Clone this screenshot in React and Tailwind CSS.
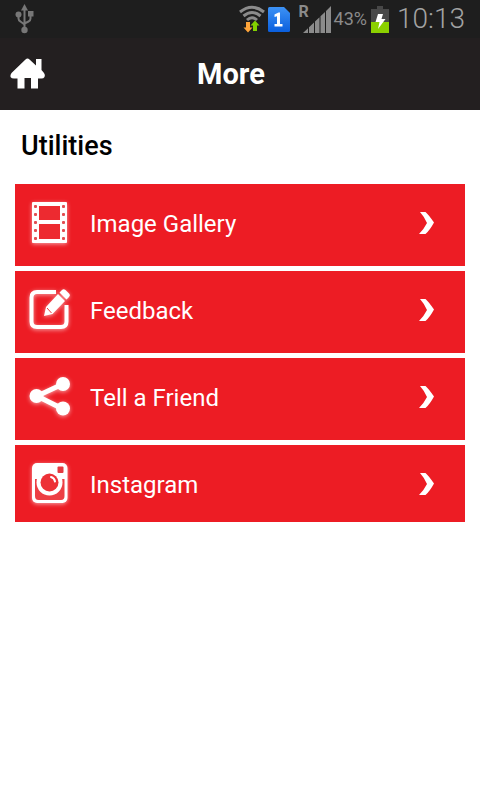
import React from "react";

function UsbIcon() {
  return (
    <svg viewBox="0 0 20 30" className="h-[30px] w-5" fill="none" stroke="#777" strokeWidth="2" aria-hidden="true">
      <path d="M9.500 5V25M3.500 11V14.500Q3.500 16.500 5.500 17.500L9.500 20.500M15.500 9V14.500Q15.500 16.500 13.500 17.500L9.500 19.500" />
      <path d="M9.500 0L13 6.500H6Z" fill="#777" stroke="none" />
      <circle cx="3.500" cy="10.500" r="3" fill="#777" stroke="none" />
      <rect x="13" y="7" width="5.500" height="5.500" fill="#777" stroke="none" />
      <circle cx="9.500" cy="26" r="3.200" fill="#777" stroke="none" />
    </svg>
  );
}

function WifiIcon() {
  return (
    <svg viewBox="0 0 26 28" className="h-7 w-[26px]" fill="none" aria-hidden="true">
      <g stroke="#8b8b8b" strokeWidth="3">
        <path d="M1 7Q13 -2.500 25 7" />
        <path d="M4.500 11Q13 4 21.500 11" />
        <path d="M8 15Q13 10.500 18 15" />
      </g>
      <path d="M7 17H11V22.500H13.500L9 27.500L4.500 22.500H7Z" fill="#ffa53a" />
      <path d="M14 26V20.500H11.500L16 15.500L20.500 20.500H18V26Z" fill="#82d000" />
    </svg>
  );
}

function SimIcon() {
  return (
    <svg viewBox="0 0 22 25" className="ml-[3px] h-[25px] w-[22px]" role="img" aria-label="SIM 1">
      <defs>
        <linearGradient id="sim" x1="0" y1="0" x2="0" y2="1">
          <stop offset="0" stopColor="#3d92f5" />
          <stop offset="1" stopColor="#0a5fdd" />
        </linearGradient>
      </defs>
      <path d="M1.500 0H16L22 6V23.500Q22 25 20.500 25H1.500Q0 25 0 23.500V1.500Q0 0 1.500 0Z" fill="url(#sim)" />
      <path d="M6.500 7.500L10.500 5.500H12V17H14.500V19.500H6.500V17H9V9.200L6.500 10Z" fill="#fff" />
    </svg>
  );
}

function SignalIcon() {
  return (
    <svg viewBox="0 0 28 27" className="h-[27px] w-7" fill="#8b8b8b" aria-hidden="true">
      <path d="M0 27L5 22.200V27ZM6 27V21.300L11 16.500V27ZM12 27V15.500L16.500 11.200V27ZM17.500 27V10.200L22 5.900V27ZM23 27V5L28 0V27Z" />
    </svg>
  );
}

function BatteryIcon() {
  return (
    <svg viewBox="0 0 18 27" className="h-[27px] w-[18px]" aria-hidden="true">
      <path d="M6 0H12V3H18V16H0V3H6Z" fill="#484848" />
      <rect y="16" width="18" height="11" fill="#8bd000" />
      <path d="M7 8H12L10.500 13H14.500L7 23L8.500 16H4.500Z" fill="#fff" />
    </svg>
  );
}

function HomeIcon() {
  return (
    <svg viewBox="0 0 36 32" className="h-8 w-9" fill="#fff" aria-hidden="true">
      <path d="M17.500 0.500Q18.500 0.500 19.500 1.500L26 7.500V1H31.500V12L34 15Q35.500 17 34.500 19Q33.500 20.500 31.500 20.500H28V30.500H21V20H14.500V30.500H7.500V20.500H4Q1.500 20.500 0.500 19Q0 17 1.500 15L15.500 1.500Q16.500 0.500 17.500 0.500Z" />
    </svg>
  );
}

function FilmIcon() {
  return (
    <>
      <rect x="3" y="1" width="35" height="41" rx="1" fill="#fff" />
      <rect x="10" y="5" width="21" height="14" fill="#ed2a30" />
      <rect x="10" y="23" width="21" height="15" fill="#ed2a30" />
      <g fill="#e24c50">
        {[4, 12, 20, 28, 36].map((y) => (
          <g key={y}>
            <rect x="5" y={y} width="3" height="3" rx="1" />
            <rect x="33" y={y} width="3" height="3" rx="1" />
          </g>
        ))}
      </g>
    </>
  );
}

function PencilIcon() {
  return (
    <>
      <path d="M27 4H8Q2.500 4 2.500 9.500V33.500Q2.500 39 8 39H32Q37.500 39 37.500 33.500V17" fill="none" stroke="#fff" strokeWidth="4" />
      <path d="M15 28L17 19L29 6L36 13L23.500 26ZM30.500 4.500L33 2Q34.500 0.500 36.500 2L40.500 6Q41.500 7.500 40 9L37.500 11.500Z" fill="#fff" />
      <path d="M18 20L22.500 25" stroke="#ed3b40" strokeWidth="1" />
    </>
  );
}

function ShareIcon() {
  return (
    <>
      <path d="M34 9L8 21L34 34" fill="none" stroke="#fff" strokeWidth="5" />
      <g fill="#fff">
        <circle cx="34" cy="9" r="7" />
        <circle cx="7.500" cy="21" r="7" />
        <circle cx="34" cy="33.500" r="7" />
      </g>
    </>
  );
}

function CameraIcon() {
  return (
    <>
      <rect x="3" y="1" width="35.500" height="40" rx="5" fill="#fff" />
      <path d="M6 17H35.500V34Q35.500 38 32 38H9.500Q6 38 6 34Z" fill="#ed3f44" />
      <circle cx="20.500" cy="20.500" r="13" fill="#fff" />
      <circle cx="20.500" cy="20.500" r="9" fill="#ed3137" />
      <path d="M22 15Q25.500 16 26 19.500" fill="none" stroke="#fff" strokeWidth="2" strokeLinecap="round" />
      <rect x="28.500" y="4.500" width="6" height="6.500" rx="1" fill="#e43a40" />
    </>
  );
}

const items = [
  { label: "Image Gallery", Icon: FilmIcon },
  { label: "Feedback", Icon: PencilIcon },
  { label: "Tell a Friend", Icon: ShareIcon },
  { label: "Instagram", Icon: CameraIcon },
];

function MenuRow({ label, Icon }) {
  return (
    <li className="bg-[#ed1c24] pb-[5px] last:pb-0">
      <button type="button" className="flex h-[77px] w-full items-center pr-[30px] pl-[14px] text-left text-white">
        <svg viewBox="0 0 42 44" className="h-11 w-[42px] overflow-visible drop-shadow-[0_1px_2px_rgba(255,255,255,0.6)]" aria-hidden="true">
          <Icon />
        </svg>
        <span className="ml-[19px] flex-1 pt-0.5 text-2xl">{label}</span>
        <svg viewBox="0 0 17 24" className="h-6 w-[17px]" fill="#fff" aria-hidden="true">
          <path d="M2 1H7.500Q10 3 16 11.500Q12 19 7.500 23H1Q6 18 9 12Q6.500 6 2 1Z" />
        </svg>
      </button>
    </li>
  );
}

export default function App() {
  return (
    <div className="min-h-screen bg-white font-['Roboto','Noto_Sans',sans-serif] text-black">
      <div className="flex h-[38px] items-center justify-between bg-[#1e1e1e] pr-[15px] pl-[15px] text-[#8b8b8b]">
        <UsbIcon />
        <div className="flex items-center">
          <WifiIcon />
          <SimIcon />
          <div className="relative ml-[13px]">
            <SignalIcon />
            <span className="absolute -top-0.5 -left-1 text-base leading-4 font-bold">R</span>
          </div>
          <span className="ml-[3px] text-lg">43%</span>
          <span className="ml-1"><BatteryIcon /></span>
          <span className="ml-2 text-[28px] leading-9 font-light text-[#a3a3a3]">10:13</span>
        </div>
      </div>
      <header className="grid h-[72px] grid-cols-[1fr_auto_1fr] items-center bg-[#231f20] px-[10px]">
        <button type="button" aria-label="Home" className="justify-self-start">
          <HomeIcon />
        </button>
        <h1 className="pt-0.5 pr-[18px] text-[29px] font-bold text-white">More</h1>
      </header>
      <main className="px-[15px]">
        <h2 className="px-[6px] pt-[17px] pb-[19px] text-[27px] leading-[38px] font-medium">Utilities</h2>
        <ul className="flex flex-col gap-[5px]">
          {items.map((item) => (
            <MenuRow key={item.label} {...item} />
          ))}
        </ul>
      </main>
    </div>
  );
}
